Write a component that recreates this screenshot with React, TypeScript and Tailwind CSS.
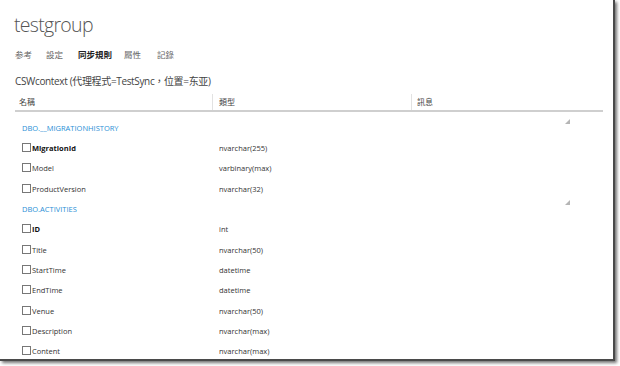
import React from "react";

type Row = { name: string; type: string; bold?: boolean } | { section: string };

const rows: Row[] = [
  { section: "DBO.__MIGRATIONHISTORY" },
  { name: "MigrationId", type: "nvarchar(255)", bold: true },
  { name: "Model", type: "varbinary(max)" },
  { name: "ProductVersion", type: "nvarchar(32)" },
  { section: "DBO.ACTIVITIES" },
  { name: "ID", type: "int", bold: true },
  { name: "Title", type: "nvarchar(50)" },
  { name: "StartTime", type: "datetime" },
  { name: "EndTime", type: "datetime" },
  { name: "Venue", type: "nvarchar(50)" },
  { name: "Description", type: "nvarchar(max)" },
  { name: "Content", type: "nvarchar(max)" },
];

const font = { fontFamily: '"Open Sans", "Noto Sans", "Noto Sans CJK TC", sans-serif' };

export default function App() {
  return (
    <div className="w-[620px] h-[366px] bg-white relative overflow-hidden" style={font}>
      <div className="w-[615px] h-[361px] bg-white border-r-2 border-b-2 border-[#4a4a4a] shadow-[2px_2px_3px_rgba(0,0,0,0.55)] overflow-hidden">
        <div className="pl-[14px] pt-[11px] text-[19.5px] leading-[28px] font-light text-[#555] tracking-[-0.7px]">
          testgroup
        </div>
        <div className="flex pl-[15px] mt-[10px] text-[8.5px] leading-[12px] text-[#666]">
          <span className="w-[31px]">参考</span>
          <span className="w-[32px]">設定</span>
          <span className="w-[46px] font-bold text-[#222]">同步規則</span>
          <span className="w-[33px]">屬性</span>
          <span>記錄</span>
        </div>
        <div className="pl-[15px] mt-[13px] text-[10px] leading-[14px] text-[#444] tracking-[-0.35px]">
          CSWcontext (代理程式=TestSync，位置=东亚)
        </div>
        <div className="ml-[15px] mr-[10px] mt-[5px] flex h-[19px] items-center border-b-2 border-[#cfcfcf] text-[8px] text-[#444]">
          <div className="w-[197px] pl-[4px]">名稱</div>
          <div className="h-[16px] w-px bg-[#e2e2e2]" />
          <div className="w-[198px] pl-[6px]">類型</div>
          <div className="h-[16px] w-px bg-[#e2e2e2]" />
          <div className="pl-[5px]">訊息</div>
        </div>
        <div className="mt-[6px]">
          {rows.map((r, i) =>
            "section" in r ? (
              <div key={i} className="relative flex h-[20.35px] items-center pl-[22px] text-[7.5px] text-[#2a8fd6]">
                {r.section}
                <svg className="absolute left-[565px] top-[1px]" width="5" height="5" viewBox="0 0 5 5">
                  <polygon points="5,0 5,5 0,5" fill="#b5b5b5" />
                </svg>
              </div>
            ) : (
              <div key={i} className="flex h-[20.35px] items-center text-[7.5px] text-[#333]">
                <div className="w-[219px] pl-[22px] flex items-center">
                  <span className="mr-[1px] -mt-[2px] inline-block h-[9px] w-[9px] border border-[#777] bg-white" />
                  <span className={r.bold ? "font-bold text-[#111]" : ""}>{r.name}</span>
                </div>
                <div>{r.type}</div>
              </div>
            )
          )}
        </div>
      </div>
    </div>
  );
}
